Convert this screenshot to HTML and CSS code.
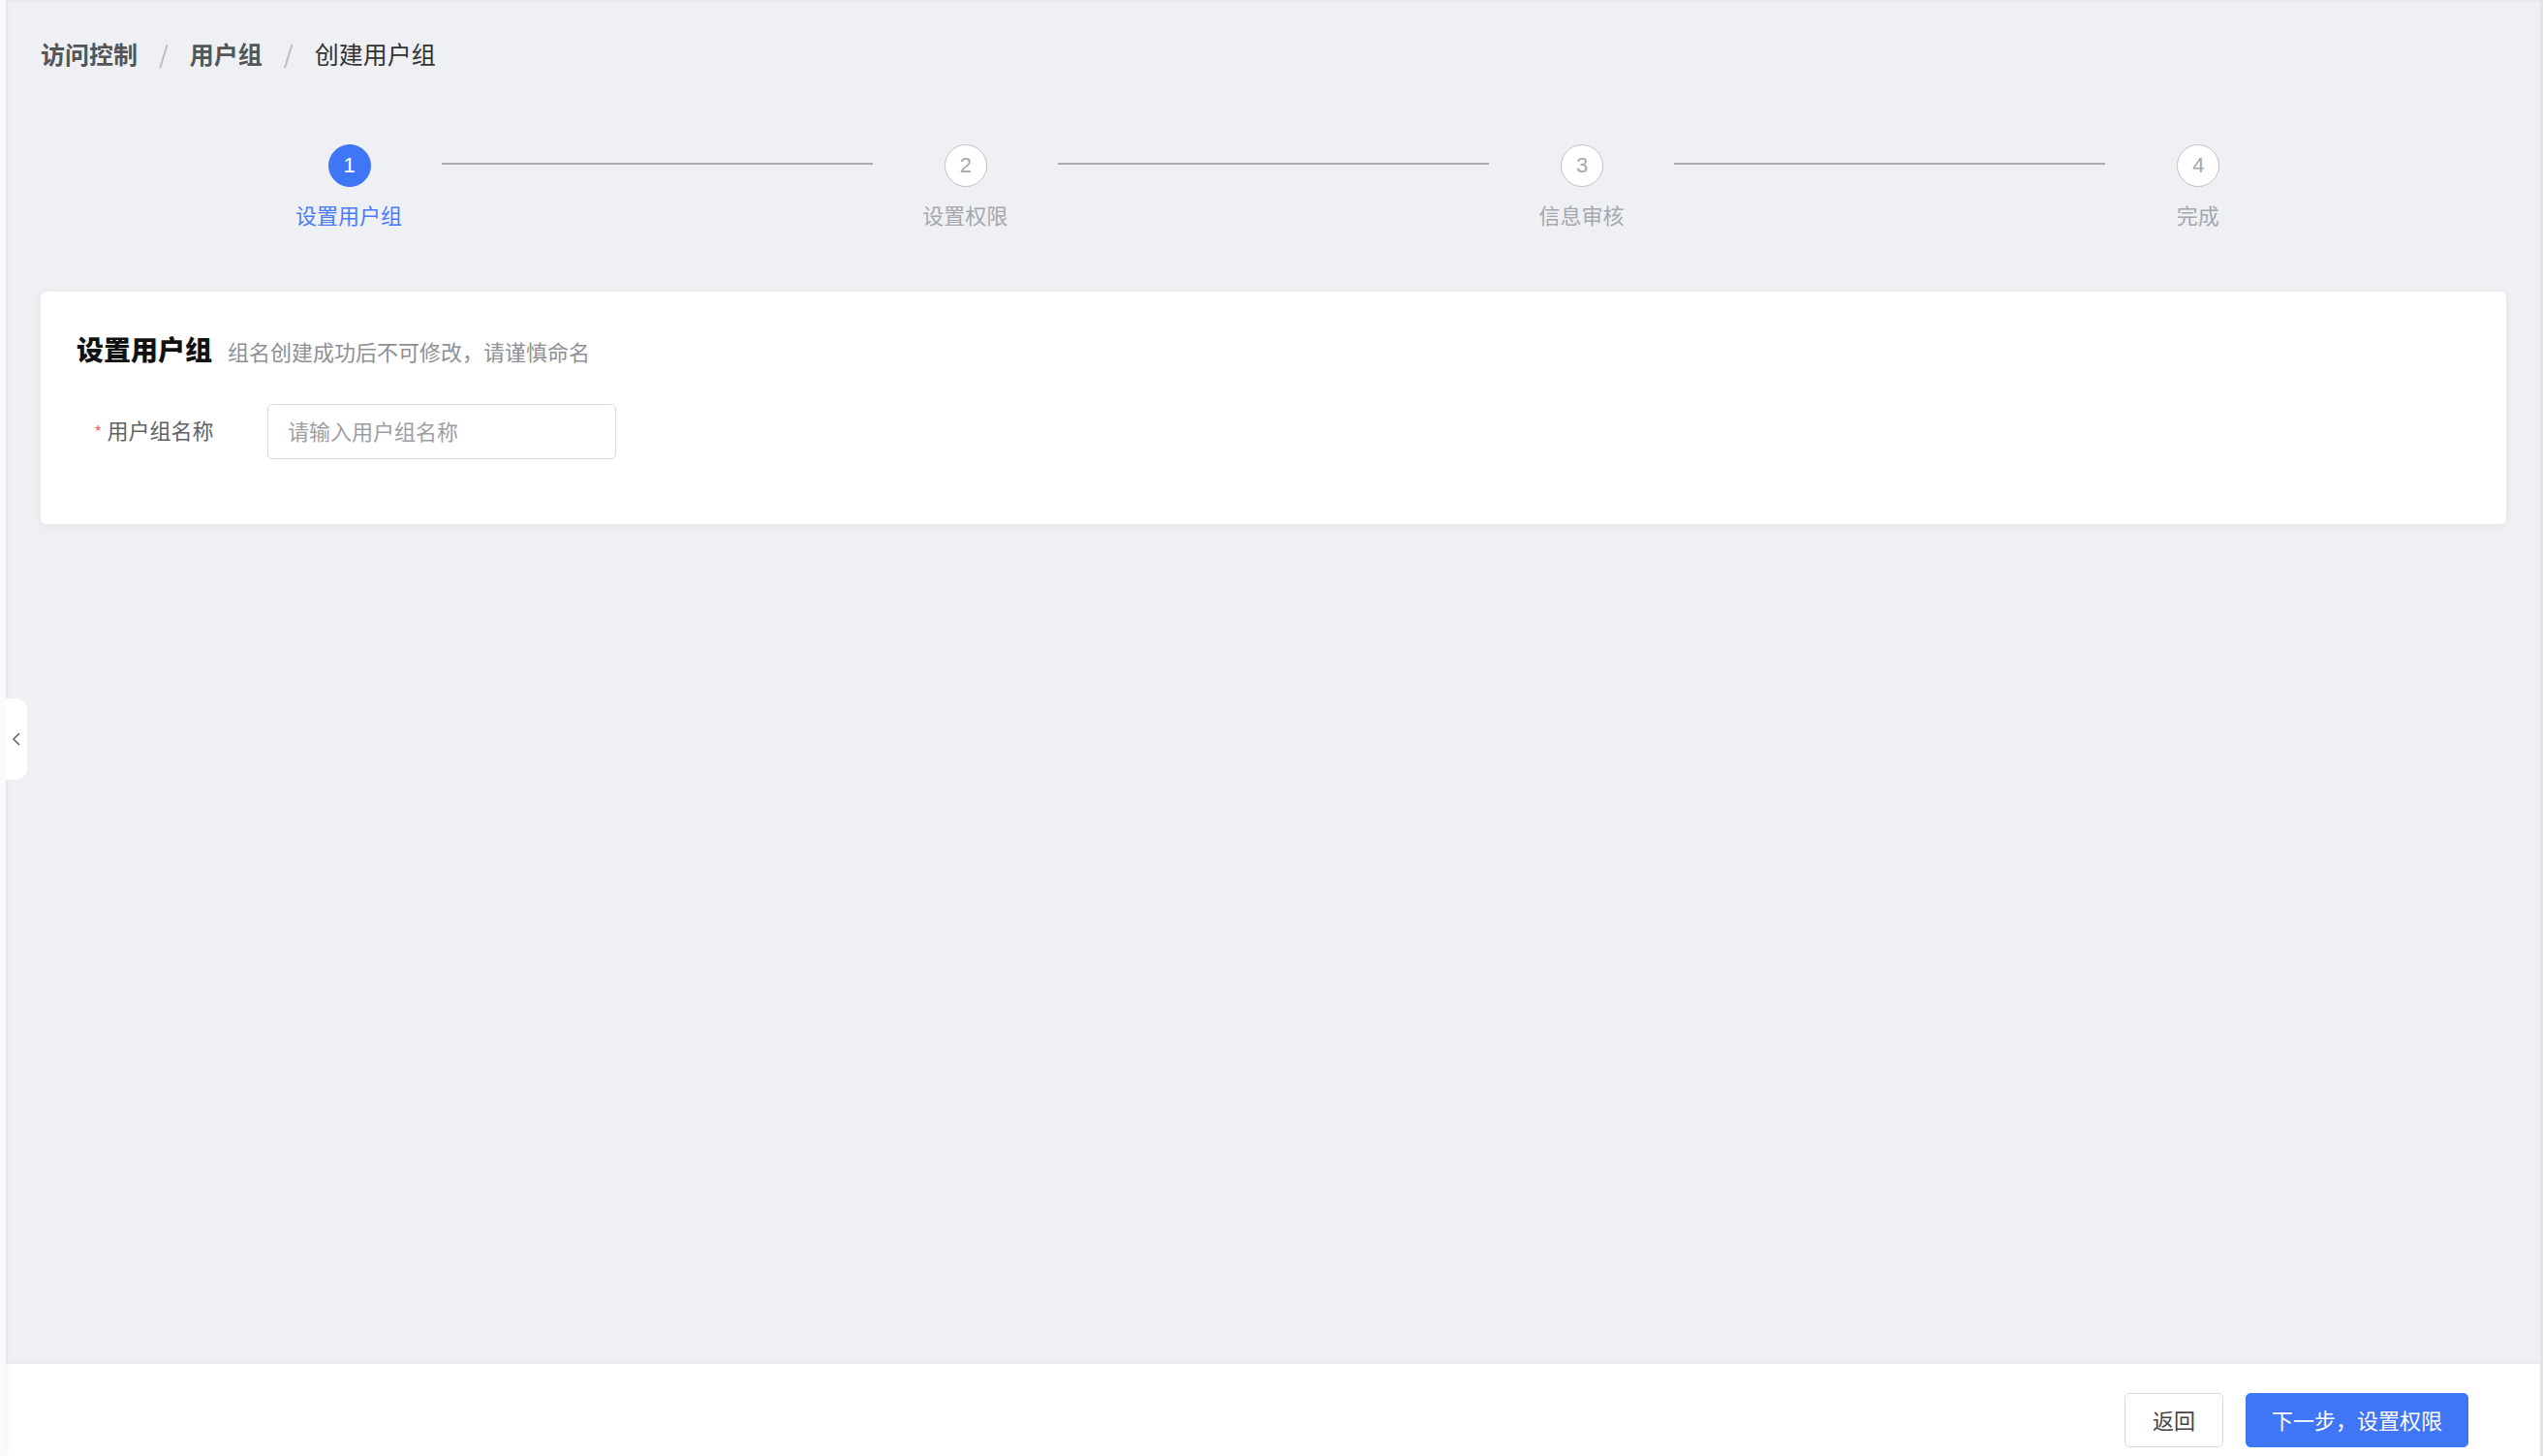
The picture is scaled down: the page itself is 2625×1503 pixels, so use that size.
FILE: index.html
```html
<!DOCTYPE html>
<html lang="zh-CN">
<head>
    <meta charset="UTF-8">
    <meta name="viewport" content="width=device-width, initial-scale=1.0">
    <title>创建用户组</title>
    <link rel="stylesheet" href="styles.css">
</head>
<body>

    <div class="app">
        <aside class="sidebar">
            <div class="collapse-tab">
                <svg width="10" height="16" viewBox="0 0 10 16">
                    <path d="M8 2 L2 8 L8 14" fill="none" stroke="#666" stroke-width="1.6"/>
                </svg>
            </div>
        </aside>

        <div class="main">
            <div class="content">
                <div class="breadcrumb">
                    <span class="crumb link">访问控制</span>
                    <span class="sep">/</span>
                    <span class="crumb link">用户组</span>
                    <span class="sep">/</span>
                    <span class="crumb">创建用户组</span>
                </div>

                <div class="steps">
                    <div class="step active first">
                        <div class="step-head">
                            <span class="seg left"></span>
                            <span class="step-icon">1</span>
                            <span class="seg right"></span>
                        </div>
                        <div class="step-title">设置用户组</div>
                    </div>
                    <div class="step">
                        <div class="step-head">
                            <span class="seg left"></span>
                            <span class="step-icon">2</span>
                            <span class="seg right"></span>
                        </div>
                        <div class="step-title">设置权限</div>
                    </div>
                    <div class="step">
                        <div class="step-head">
                            <span class="seg left"></span>
                            <span class="step-icon">3</span>
                            <span class="seg right"></span>
                        </div>
                        <div class="step-title">信息审核</div>
                    </div>
                    <div class="step last">
                        <div class="step-head">
                            <span class="seg left"></span>
                            <span class="step-icon">4</span>
                            <span class="seg right"></span>
                        </div>
                        <div class="step-title">完成</div>
                    </div>
                </div>

                <div class="card">
                    <div class="card-title">
                        <h2>设置用户组</h2>
                        <span class="hint">组名创建成功后不可修改，请谨慎命名</span>
                    </div>
                    <div class="form-item">
                        <label class="form-label"><span class="required">*</span>用户组名称</label>
                        <input class="form-input" type="text" placeholder="请输入用户组名称">
                    </div>
                </div>
            </div>

            <div class="footer">
                <button class="btn">返回</button>
                <button class="btn primary">下一步，设置权限</button>
            </div>
        </div>

        <div class="scroll-edge"></div>
    </div>

</body>
</html>
```

FILE: styles.css
```css
* {
    margin: 0;
    padding: 0;
    box-sizing: border-box;
}

body {
    height: 100vh;
    overflow: hidden;
    background-color: #eff0f4;
    font-family: "Noto Sans CJK SC", "Noto Sans", sans-serif;
    color: #333;
}

.app {
    display: flex;
    height: 100vh;
}

/* collapsed side menu */
.sidebar {
    position: relative;
    width: 6px;
    background-color: #fafafa;
    box-shadow: 1px 0 4px rgba(0, 0, 0, 0.06);
    z-index: 2;
}

.collapse-tab {
    position: absolute;
    top: 721px;
    left: 6px;
    width: 22px;
    height: 84px;
    display: flex;
    align-items: center;
    justify-content: center;
    background-color: #fff;
    border-radius: 0 12px 12px 0;
}

.main {
    flex: 1;
    display: flex;
    flex-direction: column;
    box-shadow: inset 0 5px 5px -5px rgba(0, 0, 0, 0.08);
}

.content {
    flex: 1;
    padding: 39px 35px 0 36px;
}

.scroll-edge {
    width: 3px;
    background-color: #e3e3e5;
}

/* breadcrumb */
.breadcrumb {
    display: flex;
    align-items: center;
    font-size: 25px;
    line-height: 32px;
}

.crumb {
    color: #333;
}

.crumb.link {
    color: #555;
    font-weight: 700;
}

.sep {
    margin: 0 22px;
    color: #b5b7bc;
}

/* steps */
.steps {
    display: flex;
    margin-top: 78px;
}

.step {
    flex: 1;
    display: flex;
    flex-direction: column;
    align-items: center;
}

.step-head {
    width: 100%;
    display: flex;
    align-items: center;
}

.seg {
    flex: 1;
    height: 2px;
    margin-top: -4px;
    background-color: #abadb3;
}

.seg.left {
    margin-right: 74px;
}

.seg.right {
    margin-left: 73px;
}

.step.first .seg.left,
.step.last .seg.right {
    visibility: hidden;
}

.step-icon {
    width: 44px;
    height: 44px;
    display: flex;
    align-items: center;
    justify-content: center;
    border: 1px solid #bfc2c8;
    border-radius: 50%;
    background-color: #fff;
    color: #a4a7ae;
    font-size: 22px;
    font-family: "Liberation Sans Narrow", "Liberation Sans", sans-serif;
}

.step.active .step-icon {
    border-color: #3f76f6;
    background-color: #3f76f6;
    color: #fff;
}

.step-title {
    margin-top: 13px;
    font-size: 22px;
    line-height: 30px;
    color: #a4a7ae;
}

.step.active .step-title {
    color: #4a7bf7;
}

/* card */
.card {
    margin-top: 65px;
    padding: 39px 37px 30px;
    background-color: #fff;
    border-radius: 6px;
    box-shadow: 0 2px 12px rgba(0, 0, 0, 0.05);
}

.card-title {
    display: flex;
    align-items: baseline;
    line-height: 40px;
}

.card-title h2 {
    font-size: 28px;
    font-weight: 900;
    color: #111;
}

.hint {
    margin-left: 16px;
    font-size: 22px;
    color: #8e9096;
}

.form-item {
    display: flex;
    align-items: center;
    margin-top: 35px;
    margin-bottom: 37px;
}

.form-label {
    width: 197px;
    padding-left: 18px;
    margin-top: -6px;
    font-size: 22px;
    color: #606266;
}

.required {
    margin-right: 5px;
    color: #f56c6c;
    font-size: 18px;
}

.form-input {
    width: 360px;
    height: 57px;
    padding: 0 20px 4px;
    border: 1px solid #d9dbe0;
    border-radius: 5px;
    font-size: 22px;
    font-family: inherit;
    color: #333;
    outline: none;
}

.form-input::placeholder {
    color: #9c9ea4;
}

/* footer */
.footer {
    height: 95px;
    display: flex;
    justify-content: flex-end;
    align-items: flex-start;
    gap: 23px;
    padding: 30px 74px 0 0;
    background-color: #fff;
    box-shadow: 0 -2px 6px rgba(0, 0, 0, 0.04);
}

.btn {
    height: 56px;
    padding: 0 28px 2px;
    border: 1px solid #d6d8dc;
    border-radius: 5px;
    background-color: #fff;
    color: #444;
    font-size: 22px;
    font-family: inherit;
    cursor: pointer;
}

.btn.primary {
    padding: 0 26px 2px;
    border-color: #3f76f6;
    background-color: #3f76f6;
    color: #fff;
}
```
